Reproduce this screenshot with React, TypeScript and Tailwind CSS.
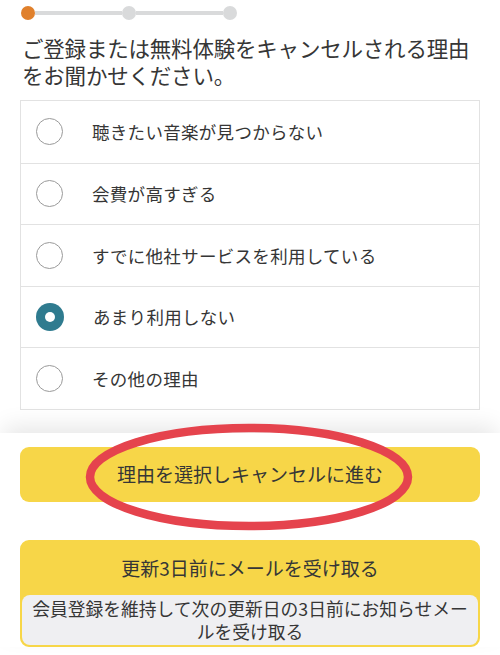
const reasons = [
  "聴きたい音楽が見つからない",
  "会費が高すぎる",
  "すでに他社サービスを利用している",
  "あまり利用しない",
  "その他の理由",
];

const Dot = ({ active }: { active?: boolean }) => (
  <span
    className={
      "block h-[14px] w-[14px] shrink-0 rounded-full " +
      (active ? "bg-[#e0802c]" : "bg-[#d9dadb]")
    }
  />
);

const Radio = ({ checked }: { checked?: boolean }) =>
  checked ? (
    <span className="flex h-[28px] w-[28px] shrink-0 items-center justify-center rounded-full bg-[#2f7b8f]">
      <span className="block h-[10px] w-[10px] rounded-full bg-white" />
    </span>
  ) : (
    <span className="block h-[27px] w-[27px] shrink-0 rounded-full border-[1.5px] border-[#9a9a9a] bg-white" />
  );

export default function App() {
  return (
    <div
      className="relative h-[655px] w-[500px] overflow-hidden bg-white text-[#363636]"
      style={{ fontFamily: '"Noto Sans CJK JP", "Noto Sans", sans-serif' }}
    >
      {/* progress */}
      <div className="ml-[21px] flex w-[216px] items-center pt-[6px]">
        <Dot active />
        <span className="h-[4px] flex-1 bg-[#d9dadb]" />
        <Dot />
        <span className="h-[4px] flex-1 bg-[#d9dadb]" />
        <Dot />
      </div>

      <h1 className="mt-[14px] px-[22px] text-[21.5px] font-normal leading-[27px] tracking-[-0.2px]">
        ご登録または無料体験をキャンセルされる理由をお聞かせください。
      </h1>

      <div className="mx-[20px] mt-[12px] border border-[#e2e2e2]">
        {reasons.map((r, i) => (
          <div
            key={r}
            className={
              "flex h-[61.6px] items-center gap-[29px] pl-[15px] " +
              (i > 0 ? "border-t border-[#e2e2e2]" : "")
            }
          >
            <Radio checked={i === 3} />
            <span className="text-[17.5px] leading-none tracking-[0.3px]">{r}</span>
          </div>
        ))}
      </div>

      <div className="mt-[23px] bg-white px-[20px] pt-[14px] shadow-[0_-10px_22px_-4px_rgba(0,0,0,0.10)]">
        <button className="flex h-[55px] w-full items-center justify-center rounded-[9px] bg-[#f7d648] text-[19px] text-[#363636]">
          理由を選択しキャンセルに進む
        </button>

        <div className="mt-[38px] rounded-[9px] border-2 border-[#f7d648] bg-[#f7d648]">
          <div className="flex h-[53px] items-center justify-center text-[19px]">
            更新3日前にメールを受け取る
          </div>
          <div className="rounded-[8px] bg-[#efeff2] px-[3px] py-[2px] text-center text-[17.8px] leading-[23px]">
            会員登録を維持して次の更新日の3日前にお知らせメールを受け取る
          </div>
        </div>
      </div>

      <svg
        className="pointer-events-none absolute left-[84px] top-[423px]"
        width="330"
        height="110"
        viewBox="0 0 330 110"
      >
        <ellipse
          cx="165"
          cy="54"
          rx="159"
          ry="49"
          fill="none"
          stroke="#e5434d"
          strokeWidth="8.5"
        />
      </svg>
    </div>
  );
}
